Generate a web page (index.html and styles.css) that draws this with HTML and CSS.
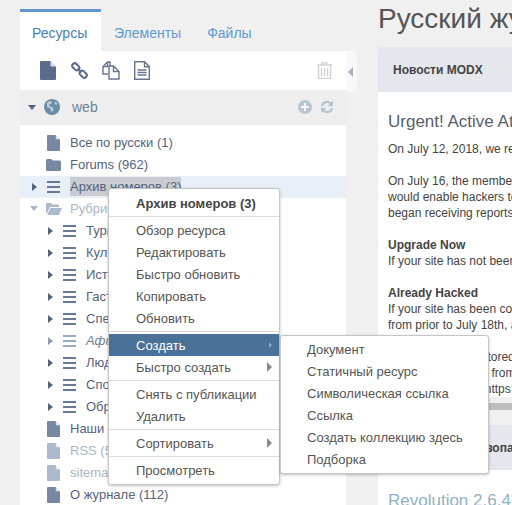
FILE: index.html
```html
<!DOCTYPE html>
<html lang="ru">
<head>
  <meta charset="UTF-8" />
  <title>Русский журнал</title>
  <link rel="stylesheet" href="styles.css">
</head>
<body>
  <svg class="defs" width="0" height="0">
    <symbol id="page" viewBox="0 0 13 16"><path d="M1 0h7.500L13 4.500V15a1 1 0 0 1-1 1H1a1 1 0 0 1-1-1V1a1 1 0 0 1 1-1z"/><path d="M8.800 0v4.200H13" fill="#fff" fill-opacity=".75"/></symbol>
    <symbol id="folder" viewBox="0 0 15 13"><path d="M1.500 1h3.800l1.400 1.600h6.800A1.500 1.500 0 0 1 15 4v7.500a1.500 1.500 0 0 1-1.500 1.500h-12A1.500 1.500 0 0 1 0 11.500V2.500A1.500 1.500 0 0 1 1.500 1z"/></symbol>
    <symbol id="folder-open" viewBox="0 0 16 13"><path d="M1 1h4l1.300 1.500H12a1 1 0 0 1 1 1V5H4L1 11H0V2a1 1 0 0 1 1-1z"/><path d="M4.500 6H16l-3 7H1z"/></symbol>
    <symbol id="bars" viewBox="0 0 13 12"><path d="M0 0h13v2H0zM0 5h13v2H0zM0 10h13v2H0z"/></symbol>
  </svg>

  <aside class="sidebar">
    <nav class="tabs">
      <a class="tab active">Ресурсы</a>
      <a class="tab">Элементы</a>
      <a class="tab">Файлы</a>
    </nav>
    <div class="toolbar">
      <svg class="tool-file" width="16" height="19" viewBox="0 0 16 19"><path d="M1 0h9.500L16 5.500V18a1 1 0 0 1-1 1H1a1 1 0 0 1-1-1V1a1 1 0 0 1 1-1z" fill="#5b6b8c"/><path d="M10.500 0v5.500H16" fill="#fff" fill-opacity=".8"/></svg>
      <svg class="tool-link" width="17" height="17" viewBox="0 0 17 17" fill="none" stroke="#5b6b8c" stroke-width="2"><rect x="-4" y="-2.500" width="8" height="5" rx="2.500" transform="translate(4.800 4.800) rotate(45)"/><rect x="-4" y="-2.500" width="8" height="5" rx="2.500" transform="translate(12.200 12.200) rotate(45)"/><path d="M6.500 6.500l4 4"/></svg>
      <svg class="tool-copy" width="18" height="19" viewBox="0 0 18 19" fill="none" stroke="#66758f" stroke-width="1.400"><path d="M8 4.500V1h-2.500L1 5.500V13h5"/><path d="M1 5.500h4.500V1"/><path d="M11.500 5H7v13h10V10.500z" fill="#fff"/><path d="M11.500 5v5.500H17"/></svg>
      <svg class="tool-doc" width="16" height="19" viewBox="0 0 16 19" fill="none" stroke="#66758f" stroke-width="1.400"><path d="M1 .7h9.500L15.300 5.500v12.800H.7V.7z"/><path d="M10.500 .7v5h5M3.500 9h9M3.500 11.500h9M3.500 14h9"/></svg>
      <svg class="tool-trash" width="15" height="17" viewBox="0 0 15 17" fill="none" stroke="#d2d2d2" stroke-width="1.400"><path d="M0 3h15M5 3V1h5v2"/><path d="M1.500 3v13a.5.5 0 0 0 .5.500h11a.5.5 0 0 0 .5-.5V3"/><path d="M4.500 6v8M7.500 6v8M10.500 6v8"/></svg>
    </div>
    <div class="site-row">
      <i class="caret down site-caret"></i>
      <svg class="globe" width="16" height="16" viewBox="0 0 16 16"><circle cx="8" cy="8" r="8" fill="#6b8ea8"/><path d="M3 3.500l3-1.500 2 1-1 2-2 .5 1 2 3 1 .5 2-1.500 2.500-1-.5-.5-3L3 8z" fill="#fff" fill-opacity=".55"/><path d="M11 2.500l2.500 2-1 1.500-2-1z" fill="#fff" fill-opacity=".55"/></svg>
      <span class="site-name">web</span>
      <svg class="site-add" width="14" height="14" viewBox="0 0 14 14"><circle cx="7" cy="7" r="7" fill="#b4c6d3"/><path d="M6 3h2v3h3v2H8v3H6V8H3V6h3z" fill="#fff"/></svg>
      <svg class="site-refresh" width="14" height="14" viewBox="0 0 14 14" fill="#b4c6d3"><path d="M.8 5.800A6.300 6.300 0 0 1 11.300 2.400L13 .8v5.400H7.600l2-2A3.800 3.800 0 0 0 3.300 5.800z"/><path d="M13.200 8.200A6.300 6.300 0 0 1 2.700 11.600L1 13.200V7.800h5.400l-2 2A3.800 3.800 0 0 0 10.700 8.200z"/></svg>
    </div>
    <ul class="tree">
      <li class="node"><i class="twist"></i><svg class="ico"><use href="#page"/></svg>Все по русски (1)</li>
      <li class="node"><i class="twist"></i><svg class="ico ico-folder"><use href="#folder"/></svg>Forums (962)</li>
      <li class="node hover"><i class="twist"><i class="caret"></i></i><svg class="ico ico-bars"><use href="#bars"/></svg><span class="picked">Архив номеров (3)</span></li>
      <li class="node off"><i class="twist"><i class="caret down"></i></i><svg class="ico ico-open"><use href="#folder-open"/></svg>Рубрики</li>
      <li class="node sub"><i class="twist"><i class="caret"></i></i><svg class="ico ico-bars"><use href="#bars"/></svg>Туризм</li>
      <li class="node sub"><i class="twist"><i class="caret"></i></i><svg class="ico ico-bars"><use href="#bars"/></svg>Культура</li>
      <li class="node sub"><i class="twist"><i class="caret"></i></i><svg class="ico ico-bars"><use href="#bars"/></svg>История</li>
      <li class="node sub"><i class="twist"><i class="caret"></i></i><svg class="ico ico-bars"><use href="#bars"/></svg>Гастроли</li>
      <li class="node sub"><i class="twist"><i class="caret"></i></i><svg class="ico ico-bars"><use href="#bars"/></svg>Спецпроекты</li>
      <li class="node sub hidden-doc"><i class="twist"><i class="caret"></i></i><svg class="ico ico-bars"><use href="#bars"/></svg><em>Афиша</em></li>
      <li class="node sub"><i class="twist"><i class="caret"></i></i><svg class="ico ico-bars"><use href="#bars"/></svg>Люди</li>
      <li class="node sub"><i class="twist"><i class="caret"></i></i><svg class="ico ico-bars"><use href="#bars"/></svg>Спорт</li>
      <li class="node sub"><i class="twist"><i class="caret"></i></i><svg class="ico ico-bars"><use href="#bars"/></svg>Образование</li>
      <li class="node"><i class="twist"></i><svg class="ico"><use href="#page"/></svg>Наши авторы</li>
      <li class="node off"><i class="twist"></i><svg class="ico"><use href="#page"/></svg>RSS (5)</li>
      <li class="node off"><i class="twist"></i><svg class="ico"><use href="#page"/></svg>sitemap</li>
      <li class="node"><i class="twist"></i><svg class="ico"><use href="#page"/></svg>О журнале (112)</li>
    </ul>
  </aside>

  <div class="collapse"><i class="collapse-arrow"></i></div>

  <main class="content">
    <h1>Русский журнал</h1>
    <section class="panel">
      <h2 class="panel-head">Новости MODX</h2>
      <div class="panel-body">
        <h3>Urgent! Active Attacks on Revolution</h3>
        <p>On July 12, 2018, we released a security update</p>
        <p>On July 16, the members of the team found issues<br>
        would enable hackers to run code on your server<br>
        began receiving reports of sites being attacked</p>
        <p><b>Upgrade Now</b><br>
        If your site has not been updated yet, do it now</p>
        <p><b>Already Hacked</b><br>
        If your site has been compromised you need a copy<br>
        from prior to July 18th, and then you should check<br>
        every core file.<br>
        Make sure one restored<br>
        a clean copy taken from<br>
        Download it here: https://modx.com</p>
      </div>
      <div class="panel-scroll"></div>
    </section>
    <section class="panel panel-second">
      <h2 class="panel-head">Оповещения безопасности</h2>
      <div class="panel-body">
        <h3 class="release">Revolution 2.6.4</h3>
      </div>
    </section>
  </main>

  <div class="menu main-menu">
    <div class="menu-item menu-title">Архив номеров (3)</div>
    <hr>
    <div class="menu-item">Обзор ресурса</div>
    <div class="menu-item">Редактировать</div>
    <div class="menu-item">Быстро обновить</div>
    <div class="menu-item">Копировать</div>
    <div class="menu-item">Обновить</div>
    <hr>
    <div class="menu-item active">Создать<i class="more"></i></div>
    <div class="menu-item">Быстро создать<i class="more"></i></div>
    <hr>
    <div class="menu-item">Снять с публикации</div>
    <div class="menu-item">Удалить</div>
    <hr>
    <div class="menu-item">Сортировать<i class="more"></i></div>
    <hr>
    <div class="menu-item">Просмотреть</div>
  </div>

  <div class="menu sub-menu">
    <div class="menu-item">Документ</div>
    <div class="menu-item">Статичный ресурс</div>
    <div class="menu-item">Символическая ссылка</div>
    <div class="menu-item">Ссылка</div>
    <div class="menu-item">Создать коллекцию здесь</div>
    <div class="menu-item">Подборка</div>
  </div>
</body>
</html>
```

FILE: styles.css
```css
* { box-sizing: border-box; }

body {
  margin: 0;
  height: 505px;
  overflow: hidden;
  display: flex;
  font-family: "Liberation Sans", Arial, sans-serif;
  background: #f0f0f0;
  color: #555;
}

.defs { position: absolute; }

/* left tree */
.sidebar {
  flex: none;
  width: 326px;
  margin-left: 20px;
  padding-top: 9px;
}

.tabs { display: flex; height: 42px; }

.tab {
  padding: 13px 12px 0;
  margin-right: 2px;
  border-top: 3px solid transparent;
  font-size: 14px;
  line-height: 17px;
  color: #5f9ad0;
}
.tab.active {
  width: 81px;
  background: #fff;
  border-top-color: #6097cc;
  color: #4a80b4;
  margin-right: 1px;
}

.toolbar {
  display: flex;
  align-items: center;
  height: 39px;
  background: #fff;
  padding-left: 20px;
}
.tool-link { margin-left: 15px; }
.tool-copy { margin-left: 14px; }
.tool-doc { margin-left: 14px; }
.tool-trash { margin-left: auto; margin-right: 14px; }

.site-row {
  display: flex;
  align-items: center;
  height: 35px;
  background: #eee;
  padding: 0 0 1px 8px;
  font-size: 14px;
  color: #6b8299;
}
.site-caret { margin-right: 8px; border-top-color: #5c7898; }
.site-name { margin-left: 12px; }
.site-add { margin-left: auto; }
.site-refresh { margin-left: 8px; margin-right: 12px; }

.tree {
  list-style: none;
  margin: 0;
  padding: 7px 0 0;
  background: #fff;
  height: 380px;
}

.node {
  display: flex;
  align-items: center;
  height: 22px;
  padding: 0 0 1px 10px;
  font-size: 13px;
  color: #55637f;
  white-space: nowrap;
}
.node.sub { padding-left: 26px; }
.node.hover { background: #e8eff7; }
.node.off { color: #a9b6c8; }

.twist { flex: none; width: 16px; padding-left: 2px; }

.ico {
  flex: none;
  width: 13px;
  height: 16px;
  margin: 0 10px 0 1px;
  fill: #7887a2;
}
.ico-folder { width: 15px; height: 13px; margin: 0 9px 0 0; }
.ico-open { width: 16px; height: 13px; margin: 0 8px 0 0; }
.ico-bars { height: 12px; fill: #6a7a96; }
.off .ico { fill: #acbacb; }
.hidden-doc { color: #6f7d96; }
.hidden-doc .ico { fill: #9aabc2; }
.hidden-doc .caret { border-left-color: #8d9db5; }

.picked {
  background: #c9cdd2;
  line-height: 19px;
}

.caret {
  display: block;
  width: 0;
  height: 0;
  border-top: 4px solid transparent;
  border-bottom: 4px solid transparent;
  border-left: 5px solid #55637f;
}
.caret.down {
  border-top: 5px solid #55637f;
  border-bottom: 0;
  border-left: 4px solid transparent;
  border-right: 4px solid transparent;
}
.off .caret.down { border-top-color: #a9b6c8; }
.node .caret.down { margin-left: -2px; }

.collapse {
  flex: none;
  width: 11px;
  height: 41px;
  margin-top: 51px;
  background: #f8f8f8;
  border-radius: 0 4px 4px 0;
  display: flex;
  align-items: center;
  padding-left: 2px;
}
.collapse-arrow {
  border-top: 5px solid transparent;
  border-bottom: 5px solid transparent;
  border-right: 5px solid #a3b0c2;
}

/* right side */
.content {
  flex: 1;
  min-width: 0;
  margin-left: 21px;
  overflow: hidden;
  white-space: nowrap;
}

h1 {
  margin: 0;
  height: 47px;
  padding-top: 4px;
  font-size: 28px;
  line-height: 30px;
  font-weight: normal;
  color: #555;
}

.panel-head {
  margin: 0;
  height: 45px;
  padding-left: 15px;
  background: #e4e7ec;
  border-radius: 4px 0 0 0;
  font-size: 12px;
  line-height: 46px;
  color: #444;
}

.panel-body {
  background: #fff;
  padding: 19px 0 0 10px;
  font-size: 12px;
  line-height: 16px;
  color: #444;
}
.panel-body h3 {
  margin: 0 0 9px;
  font-size: 17px;
  line-height: 21px;
  font-weight: normal;
  color: #56606f;
}
.panel-body p { margin: 0 0 16px; }
.panel-body p:last-child { margin-bottom: 6px; }

.panel-scroll {
  height: 7px;
  background: #bdbdbd;
}

.panel-second { margin-top: 15px; }
.panel-second .panel-body { height: 60px; padding-top: 20px; }
.panel-body .release { color: #8fb2c4; }

/* context menus */
.menu {
  position: absolute;
  background: #fff;
  border: 1px solid #c6c6c6;
  border-radius: 3px;
  box-shadow: 0 1px 3px rgba(0, 0, 0, .25);
  font-size: 13px;
  color: #555;
  white-space: nowrap;
}
.main-menu {
  left: 108px;
  top: 188px;
  width: 172px;
  padding: 3px 0;
}
.sub-menu {
  left: 280px;
  top: 335px;
  width: 209px;
  padding: 2px 0 3px;
}

.menu-item {
  display: flex;
  justify-content: space-between;
  align-items: center;
  height: 22px;
  padding: 0 7px 0 27px;
}
.sub-menu .menu-item { padding-left: 26px; }
.menu-title {
  font-weight: bold;
  color: #444;
  margin-bottom: 1px;
}
.menu-item.active {
  background: #4a7198;
  color: #fff;
}

.menu hr {
  margin: 2px 0;
  border: 0;
  border-top: 1px solid #ddd;
}

.more {
  border-top: 5px solid transparent;
  border-bottom: 5px solid transparent;
  border-left: 5px solid #8a8a8a;
}
.active .more {
  border-top-width: 3px;
  border-bottom-width: 3px;
  border-left: 3px solid #9aa9ba;
}
```
